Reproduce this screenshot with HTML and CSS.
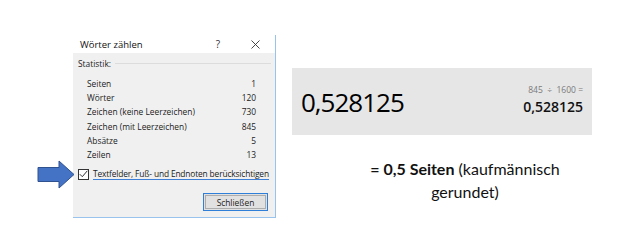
FILE: index.html
```html
<!DOCTYPE html>
<html lang="de">
<head>
    <meta charset="UTF-8">
    <title>Wörter zählen</title>
    <link rel="stylesheet" href="styles.css">
</head>
<body>
    <div class="page">
        <div class="dialog-wrap">
            <svg class="arrow" width="40" height="29" viewBox="0 0 40 29">
                <path d="M1 7.5 H22 V1 L37 14.5 L22 28 V21.5 H1 Z" fill="#4472c4" stroke="#2f528f" stroke-width="1"/>
            </svg>
            <div class="dialog">
                <div class="title-bar">
                    <span class="title">Wörter zählen</span>
                    <span class="help">?</span>
                    <svg class="close" width="9" height="9" viewBox="0 0 9 9">
                        <path d="M0.5 0.5 L8.5 8.5 M8.5 0.5 L0.5 8.5" stroke="#333" stroke-width="0.9"/>
                    </svg>
                </div>
                <div class="dialog-body">
                    <div class="group-label"><span>Statistik:</span><span class="rule"></span></div>
                    <div class="stats">
                        <div class="row"><span>Seiten</span><span>1</span></div>
                        <div class="row"><span>Wörter</span><span>120</span></div>
                        <div class="row"><span>Zeichen (keine Leerzeichen)</span><span>730</span></div>
                        <div class="row"><span>Zeichen (mit Leerzeichen)</span><span>845</span></div>
                        <div class="row"><span>Absätze</span><span>5</span></div>
                        <div class="row"><span>Zeilen</span><span>13</span></div>
                    </div>
                    <label class="check">
                        <span class="box">
                            <svg width="9" height="8" viewBox="0 0 9 8">
                                <path d="M0.8 4.2 L3.3 6.7 L8.3 0.8" fill="none" stroke="#333" stroke-width="1"/>
                            </svg>
                        </span>
                        <span class="check-text">Textfelder, Fuß- und Endnoten berücksichtigen</span>
                    </label>
                    <div class="actions">
                        <button class="close-btn">Schließen</button>
                    </div>
                </div>
            </div>
        </div>

        <div class="right">
            <div class="calc">
                <div class="calc-result">0,528125</div>
                <div class="calc-side">
                    <div class="calc-expr">845 &nbsp;÷ &nbsp;1600 =</div>
                    <div class="calc-small">0,528125</div>
                </div>
            </div>
            <p class="note"><b>= 0,5 Seiten</b> (kaufmännisch<br>gerundet)</p>
        </div>
    </div>
</body>
</html>
```

FILE: styles.css
```css
body {
    margin: 0;
    background: #fff;
    font-family: "Open Sans", "Noto Sans", sans-serif;
    color: #222;
}
.page {
    display: flex;
    width: 620px;
    height: 248px;
    overflow: hidden;
}
.dialog-wrap {
    position: relative;
    margin: 35px 0 0 73px;
    width: 203px;
}
.arrow {
    position: absolute;
    left: -36px;
    top: 125px;
}
.dialog {
    border-right: 1px solid #99c2ec;
    border-bottom: 1px solid #99c2ec;
}
.title-bar {
    display: flex;
    align-items: center;
    height: 18px;
    padding-left: 7px;
    background: #fff;
    font-size: 9.5px;
    color: #111;
}
.title {
    flex: 1;
}
.help {
    margin-right: 31px;
    font-size: 10px;
    color: #333;
}
.close {
    margin-right: 15px;
}
.dialog-body {
    background: #f0f0f0;
    height: 164px;
    padding: 4px 0 0 5px;
    box-sizing: border-box;
    font-size: 8.4px;
    color: #222;
}
.group-label {
    display: flex;
    align-items: center;
    height: 12px;
}
.group-label .rule {
    flex: 1;
    height: 1px;
    background: #dcdcdc;
    margin: 0 4px 0 4px;
}
.stats {
    margin: 8px 19px 0 9px;
}
.row {
    display: flex;
    justify-content: space-between;
    height: 14.2px;
    line-height: 14.2px;
}
.check {
    display: flex;
    align-items: center;
    margin-top: 5px;
    height: 14px;
    white-space: nowrap;
}
.box {
    display: flex;
    align-items: center;
    justify-content: center;
    flex: none;
    width: 9px;
    height: 9px;
    border: 1px solid #333;
    background: #fff;
    margin-right: 4px;
}
.check-text {
    border-bottom: 1px solid #3d7fd6;
    line-height: 11px;
    letter-spacing: -0.15px;
}
.actions {
    display: flex;
    justify-content: flex-end;
    margin: 12px 7px 0 0;
}
.close-btn {
    width: 65px;
    height: 18px;
    padding: 0;
    font-family: inherit;
    font-size: 8.4px;
    color: #222;
    background: #e1e1e1;
    border: 1px solid #2f7fd8;
    box-shadow: inset 0 0 0 1px #e1e1e1, inset 0 0 0 2px #adadad;
}
.right {
    margin-left: 16px;
    width: 300px;
}
.calc {
    display: flex;
    justify-content: space-between;
    align-items: center;
    margin-top: 68px;
    height: 67px;
    background: #e6e6e6;
    padding: 0 9px;
    box-sizing: border-box;
}
.calc-result {
    font-size: 26px;
    letter-spacing: -1px;
    color: #000;
    padding-top: 1px;
}
.calc-side {
    text-align: right;
    margin-top: -4px;
}
.calc-expr {
    font-size: 8.5px;
    color: #7a7a7a;
}
.calc-small {
    font-size: 14px;
    font-weight: 600;
    color: #111;
    margin-top: 2px;
}
.note {
    margin: 22px 0 0 0;
    text-align: center;
    font-family: Lato, "Open Sans", sans-serif;
    font-size: 16px;
    line-height: 23px;
    color: #111;
    width: 346px;
}
```
